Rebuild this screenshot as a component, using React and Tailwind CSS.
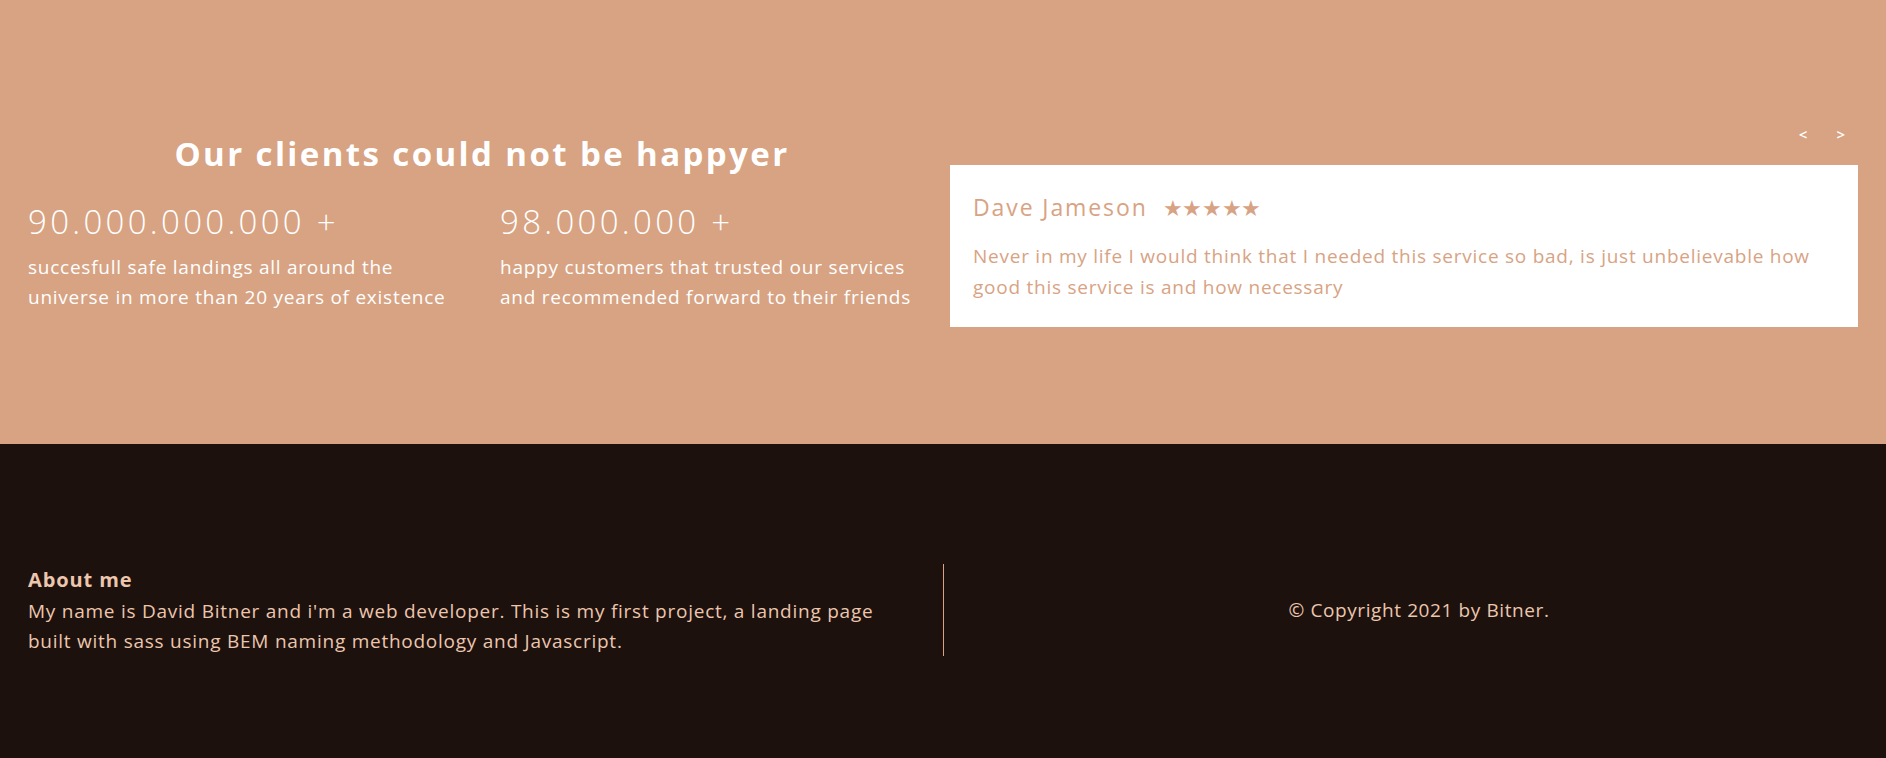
import React from 'react';

const stats = [
  {
    value: '90.000.000.000 +',
    text: 'succesfull safe landings all around the universe in more than 20 years of existence',
  },
  {
    value: '98.000.000 +',
    text: 'happy customers that trusted our services and recommended forward to their friends',
  },
];

function Stat({ value, text, first }) {
  return (
    <div className={first ? 'w-[472px] shrink-0 pr-4' : 'flex-1 min-w-0'}>
      <p className="text-[33px] font-light leading-[48px] tracking-[3.3px]">{value}</p>
      <p className="mt-[6px] text-[19px] leading-[30px] tracking-[0.75px] max-w-[430px]">{text}</p>
    </div>
  );
}

function Testimonial() {
  return (
    <div className="flex flex-col pt-[6px]">
      <div className="flex justify-end gap-[29px] pr-[13px] text-[15px] font-semibold text-white leading-[20px]">
        <button>&lt;</button>
        <button>&gt;</button>
      </div>
      <div className="mt-[21px] bg-white px-[23px] pt-[27px] pb-[24px] text-[#d8a384]">
        <div className="flex items-center gap-[15px]">
          <h3 className="text-[23px] leading-[30px] tracking-[1.9px]">Dave Jameson</h3>
          <span className="text-[22px] leading-[30px] tracking-[-0.4px]">★★★★★</span>
        </div>
        <p className="mt-[19px] text-[19px] leading-[31px] tracking-[0.75px]">
          Never in my life I would think that I needed this service so bad, is just unbelievable how good this service is and how necessary
        </p>
      </div>
    </div>
  );
}

export default function App() {
  return (
    <div className="min-h-screen font-['Open_Sans',sans-serif]">
      <section className="h-[444px] bg-[#d7a383] text-white px-[28px] flex items-center">
        <div className="w-full grid grid-cols-2 gap-[14px] items-center">
          <div>
            <h2 className="text-center text-[33px] font-bold leading-[44px] tracking-[2.4px]">Our clients could not be happyer</h2>
            <div className="mt-[22px] flex">
              {stats.map((s, i) => (
                <Stat key={s.value} first={i === 0} {...s} />
              ))}
            </div>
          </div>
          <Testimonial />
        </div>
      </section>

      <footer className="bg-[#1c110d] py-[120px] flex text-[#ecc6ad]">
        <div className="w-[944px] pl-[28px] pr-[30px] border-r border-[#d8a384]">
          <h4 className="text-[20px] font-bold leading-[28px] pt-[2px] tracking-[0.9px]">About me</h4>
          <p className="mt-[2px] text-[19px] leading-[30px] tracking-[0.75px]">
            My name is David Bitner and i'm a web developer. This is my first project, a landing page built with sass using BEM naming methodology and Javascript.
          </p>
        </div>
        <div className="flex-1 flex items-center justify-center pl-[8px]">
          <p className="text-[19px] tracking-[0.6px]">© Copyright 2021 by Bitner.</p>
        </div>
      </footer>
    </div>
  );
}
